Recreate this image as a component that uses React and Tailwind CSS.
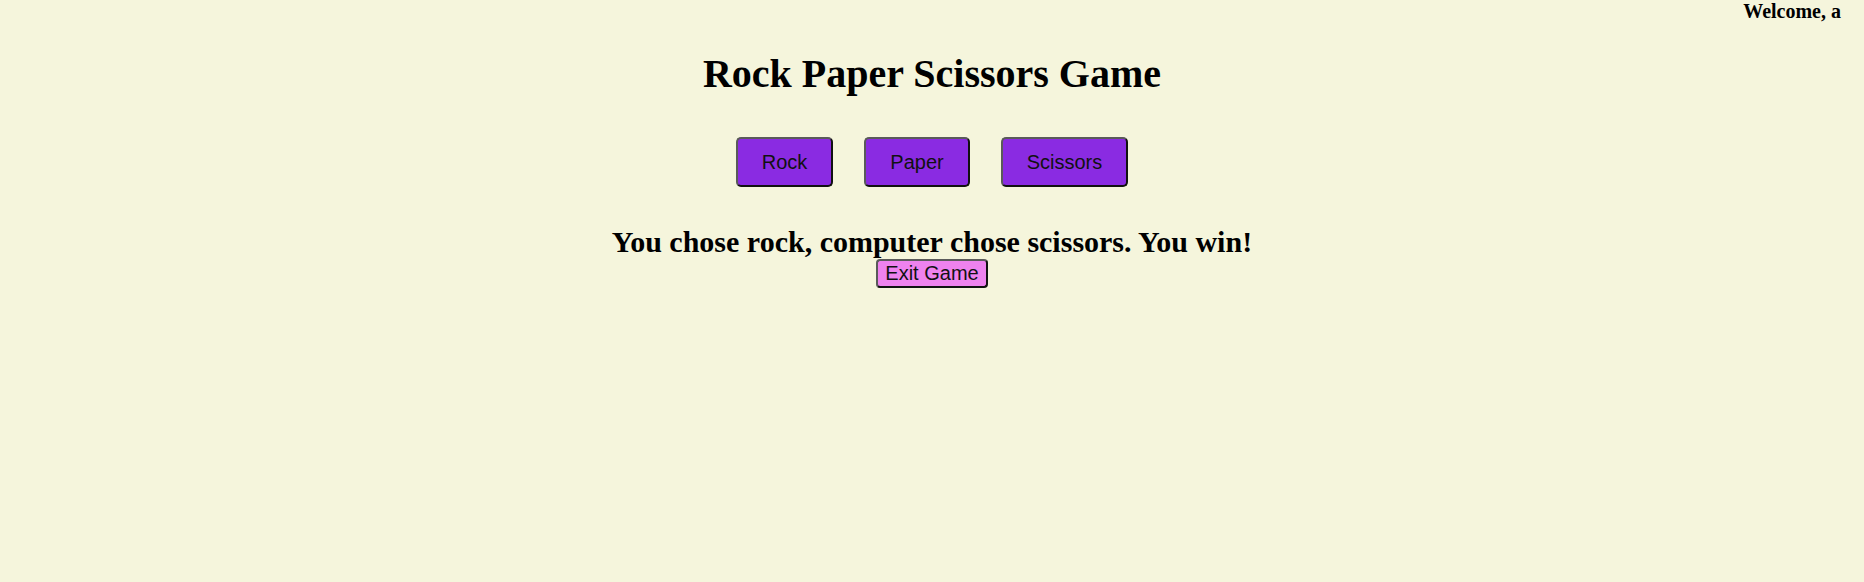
import { useState } from "react";

const choices = ["Rock", "Paper", "Scissors"];

function App() {
    const [result, setResult] = useState("You chose rock, computer chose scissors. You win!");

    const play = (choice) => {
        const computer = choices[Math.floor(Math.random() * 3)];
        const me = choice.toLowerCase();
        const them = computer.toLowerCase();
        let outcome = "It's a tie!";
        if (
            (me === "rock" && them === "scissors") ||
            (me === "paper" && them === "rock") ||
            (me === "scissors" && them === "paper")
        ) {
            outcome = "You win!";
        } else if (me !== them) {
            outcome = "You lose!";
        }
        setResult(`You chose ${me}, computer chose ${them}. ${outcome}`);
    };

    return (
        <div className="min-h-screen bg-[#f5f5dc] text-black font-['Liberation_Serif','Times_New_Roman',serif]">
            <div className="flex justify-end pr-[23px]">
                <span className="text-[20px] leading-[23px] font-bold">Welcome, a</span>
            </div>

            <div className="flex flex-col items-center">
                <h1 className="mt-[28px] text-[40px] leading-[46px] font-bold">Rock Paper Scissors Game</h1>

                <div className="mt-[40px] flex gap-[31px]">
                    {choices.map((c) => (
                        <button
                            key={c}
                            onClick={() => play(c)}
                            className="h-[50px] px-[24px] rounded-[5px] bg-[#8a2be2] text-[#111] text-[20px] leading-[23px] font-['Liberation_Sans',Arial,sans-serif] border-[2px] border-t-[#5a5a5a] border-l-[#5a5a5a] border-r-[#111] border-b-[#111]"
                        >
                            {c}
                        </button>
                    ))}
                </div>

                <h2 className="mt-[37px] text-[30px] leading-[35px] font-bold">{result}</h2>
                <button className="h-[29px] px-[7px] rounded-[4px] bg-[#ee82ee] text-[#111] text-[20px] leading-[23px] font-['Liberation_Sans',Arial,sans-serif] border-[2px] border-t-[#5a5a5a] border-l-[#5a5a5a] border-r-[#111] border-b-[#111]">
                    Exit Game
                </button>
            </div>
        </div>
    );
}

export default App;
